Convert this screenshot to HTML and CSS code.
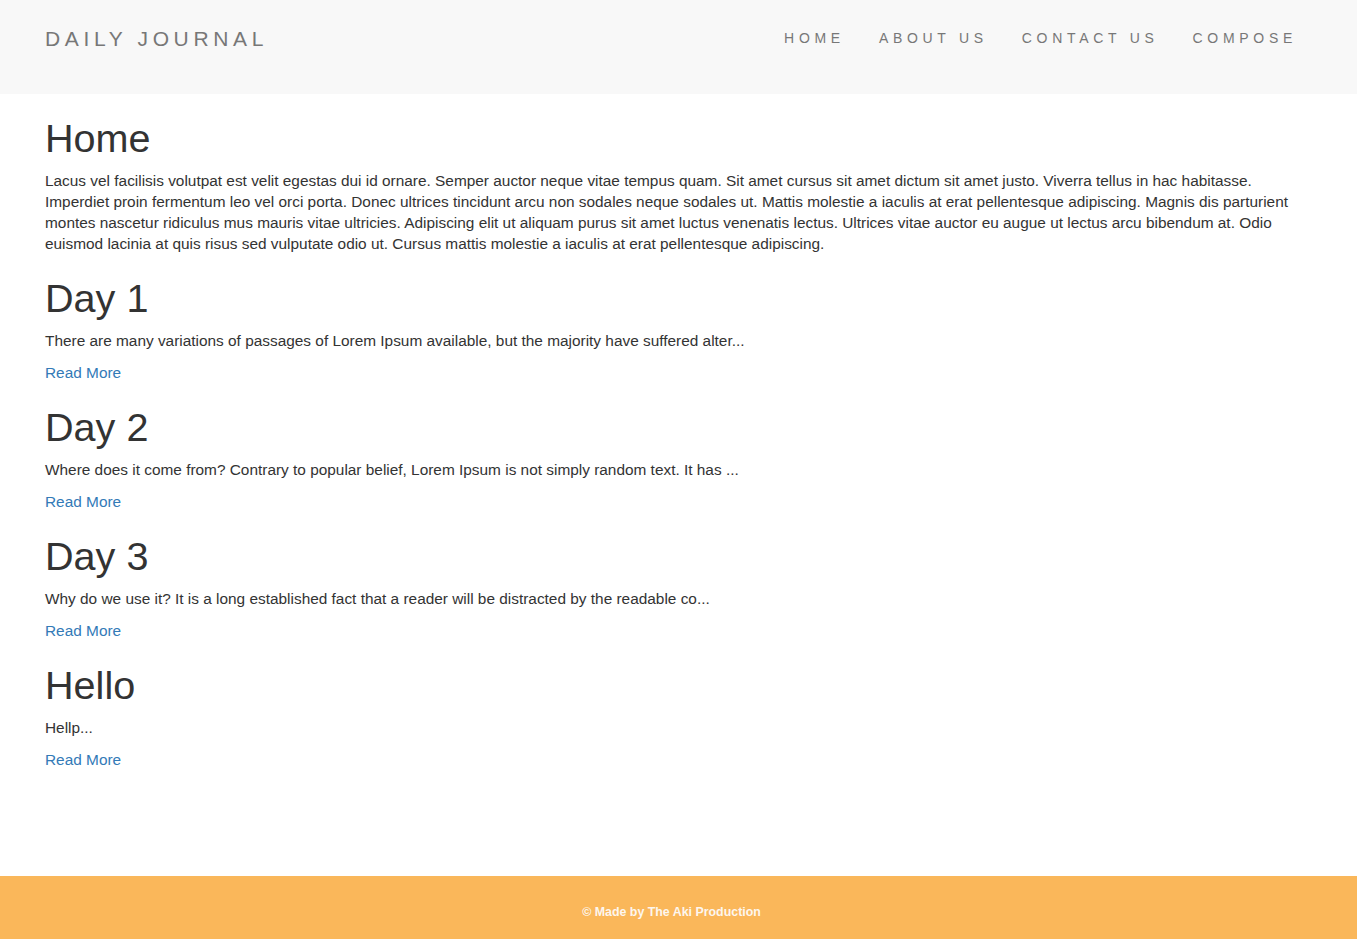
FILE: index.html
```html
<!DOCTYPE html>
<html lang="en">
<head>
<meta charset="utf-8">
<title>Daily Journal</title>
<link rel="stylesheet" href="styles.css">
</head>
<body>
<nav class="navbar">
  <div class="brand">DAILY JOURNAL</div>
  <ul class="nav-links">
    <li><a href="#">HOME</a></li>
    <li><a href="#">ABOUT US</a></li>
    <li><a href="#">CONTACT US</a></li>
    <li><a href="#">COMPOSE</a></li>
  </ul>
</nav>
<main class="container">
  <section class="post">
    <h1>Home</h1>
    <p>Lacus vel facilisis volutpat est velit egestas dui id ornare. Semper auctor neque vitae tempus quam. Sit amet cursus sit amet dictum sit amet justo. Viverra tellus in hac habitasse. Imperdiet proin fermentum leo vel orci porta. Donec ultrices tincidunt arcu non sodales neque sodales ut. Mattis molestie a iaculis at erat pellentesque adipiscing. Magnis dis parturient montes nascetur ridiculus mus mauris vitae ultricies. Adipiscing elit ut aliquam purus sit amet luctus venenatis lectus. Ultrices vitae auctor eu augue ut lectus arcu bibendum at. Odio euismod lacinia at quis risus sed vulputate odio ut. Cursus mattis molestie a iaculis at erat pellentesque adipiscing.</p>
  </section>
  <section class="post">
    <h1>Day 1</h1>
    <p>There are many variations of passages of Lorem Ipsum available, but the majority have suffered alter...</p>
    <div class="more"><a href="#">Read More</a></div>
  </section>
  <section class="post">
    <h1>Day 2</h1>
    <p>Where does it come from? Contrary to popular belief, Lorem Ipsum is not simply random text. It has ...</p>
    <div class="more"><a href="#">Read More</a></div>
  </section>
  <section class="post">
    <h1>Day 3</h1>
    <p>Why do we use it? It is a long established fact that a reader will be distracted by the readable co...</p>
    <div class="more"><a href="#">Read More</a></div>
  </section>
  <section class="post">
    <h1>Hello</h1>
    <p>Hellp...</p>
    <div class="more"><a href="#">Read More</a></div>
  </section>
</main>
<footer class="footer">
  <p>© Made by The Aki Production</p>
</footer>
</body>
</html>
```
FILE: styles.css
```css
html, body {
  margin: 0;
  padding: 0;
}
body {
  min-height: 100vh;
  display: flex;
  flex-direction: column;
  font-family: "Liberation Sans", Arial, sans-serif;
  font-size: 15.4px;
  line-height: 21px;
  color: #333333;
  background: #ffffff;
}
.navbar {
  height: 94px;
  background: #f8f8f8;
  display: flex;
  align-items: center;
  justify-content: space-between;
  padding: 0 45px 18px;
  box-sizing: border-box;
}
.brand {
  font-size: 21px;
  letter-spacing: 4.65px;
  color: #777777;
}
.nav-links {
  list-style: none;
  margin: 0;
  padding: 0 15px 0 0;
  display: flex;
  gap: 34px;
}
.nav-links a {
  font-size: 14px;
  letter-spacing: 4.7px;
  color: #777777;
  text-decoration: none;
}
.container {
  flex: 1;
  padding: 0 45px 40px;
}
h1 {
  font-size: 39.6px;
  line-height: 44px;
  font-weight: 500;
  margin: 22px 0 10px;
  color: #333333;
}
p {
  margin: 0 0 11px;
}
.more a {
  color: #337ab7;
  text-decoration: none;
}
.footer {
  background: #fab75a;
  height: 63px;
  display: flex;
  align-items: center;
  justify-content: center;
  padding-right: 14px;
}
.footer p {
  margin: 10px 0 0;
  color: #fdf6ee;
  font-size: 12.4px;
  font-weight: bold;
}
```
